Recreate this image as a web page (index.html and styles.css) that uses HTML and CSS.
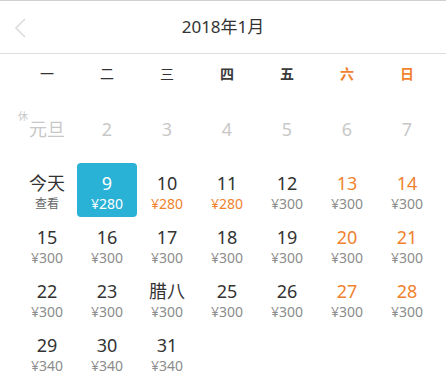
FILE: index.html
```html
<!DOCTYPE html>
<html lang="zh-CN">
<head>
<meta charset="utf-8">
<link rel="stylesheet" href="styles.css">
</head>
<body>
<div class="cal">
  <header class="head">
    <svg class="prev" width="14" height="22" viewBox="0 0 14 22"><polyline points="11,2 2,11 11,20" fill="none" stroke="#dcdcdc" stroke-width="1.6"/></svg>
    <div class="title">2018年1月</div>
  </header>
  <div class="week">
    <span>一</span><span>二</span><span>三</span><span class="hv">四</span><span class="hv">五</span><span class="hv wk">六</span><span class="hv wk">日</span>
  </div>
  <div class="grid">
    <div class="cell past"><span class="tag">休</span><span class="num">元旦</span><span class="price"></span></div>
    <div class="cell past"><span class="num">2</span><span class="price"></span></div>
    <div class="cell past"><span class="num">3</span><span class="price"></span></div>
    <div class="cell past"><span class="num">4</span><span class="price"></span></div>
    <div class="cell past"><span class="num">5</span><span class="price"></span></div>
    <div class="cell past"><span class="num">6</span><span class="price"></span></div>
    <div class="cell past"><span class="num">7</span><span class="price"></span></div>

    <div class="cell"><span class="num">今天</span><span class="price small">查看</span></div>
    <div class="cell sel"><span class="num">9</span><span class="price">¥280</span></div>
    <div class="cell"><span class="num">10</span><span class="price low">¥280</span></div>
    <div class="cell"><span class="num">11</span><span class="price low">¥280</span></div>
    <div class="cell"><span class="num">12</span><span class="price">¥300</span></div>
    <div class="cell wkd"><span class="num">13</span><span class="price">¥300</span></div>
    <div class="cell wkd"><span class="num">14</span><span class="price">¥300</span></div>

    <div class="cell"><span class="num">15</span><span class="price">¥300</span></div>
    <div class="cell"><span class="num">16</span><span class="price">¥300</span></div>
    <div class="cell"><span class="num">17</span><span class="price">¥300</span></div>
    <div class="cell"><span class="num">18</span><span class="price">¥300</span></div>
    <div class="cell"><span class="num">19</span><span class="price">¥300</span></div>
    <div class="cell wkd"><span class="num">20</span><span class="price">¥300</span></div>
    <div class="cell wkd"><span class="num">21</span><span class="price">¥300</span></div>

    <div class="cell"><span class="num">22</span><span class="price">¥300</span></div>
    <div class="cell"><span class="num">23</span><span class="price">¥300</span></div>
    <div class="cell"><span class="num">腊八</span><span class="price">¥300</span></div>
    <div class="cell"><span class="num">25</span><span class="price">¥300</span></div>
    <div class="cell"><span class="num">26</span><span class="price">¥300</span></div>
    <div class="cell wkd"><span class="num">27</span><span class="price">¥300</span></div>
    <div class="cell wkd"><span class="num">28</span><span class="price">¥300</span></div>

    <div class="cell"><span class="num">29</span><span class="price">¥340</span></div>
    <div class="cell"><span class="num">30</span><span class="price">¥340</span></div>
    <div class="cell"><span class="num">31</span><span class="price">¥340</span></div>
  </div>
</div>
</body>
</html>
```
FILE: styles.css
```css
* { box-sizing: border-box; }
html, body { margin: 0; padding: 0; background: #fff; }
body {
  font-family: "Noto Sans", "Noto Sans CJK SC", sans-serif;
  color: #333;
  width: 446px;
  height: 386px;
  overflow: hidden;
}
.cal { border-top: 1px solid #d0d0d0; }
.head {
  position: relative;
  height: 53px;
  border-bottom: 1px solid #dedede;
  display: flex;
  align-items: center;
  justify-content: center;
}
.prev { position: absolute; left: 14px; top: 16px; }
.title { font-size: 17px; line-height: 24px; color: #333; }
.week {
  display: grid;
  grid-template-columns: repeat(7, 60px);
  padding: 10px 9px 0 17px;
  height: 55px;
  font-size: 14px;
  line-height: 20px;
  color: #333;
  text-align: center;
}
.week .hv { font-weight: bold; color: #3a3a3a; }
.week .wk { color: #f0822e; }
.grid {
  display: grid;
  grid-template-columns: repeat(7, 60px);
  grid-auto-rows: 54px;
  padding: 0 9px 0 17px;
}
.cell {
  position: relative;
  display: flex;
  flex-direction: column;
  align-items: center;
  padding-top: 8px;
  border-radius: 4px;
}
.num { font-size: 18px; line-height: 24px; color: #333; }
.price { font-size: 14px; line-height: 18px; color: #8c8c8c; height: 18px; }
.price.small { font-size: 12px; color: #666; }
.price.low { color: #f0822e; }
.wkd .num { color: #f0822e; }
.past .num { color: #c8c8c8; }
.tag {
  position: absolute;
  left: 1px;
  top: 1px;
  font-size: 10px;
  line-height: 12px;
  color: #c8c8c8;
}
.sel { background: #2ab1d6; }
.sel .num, .sel .price { color: #fff; }
```
